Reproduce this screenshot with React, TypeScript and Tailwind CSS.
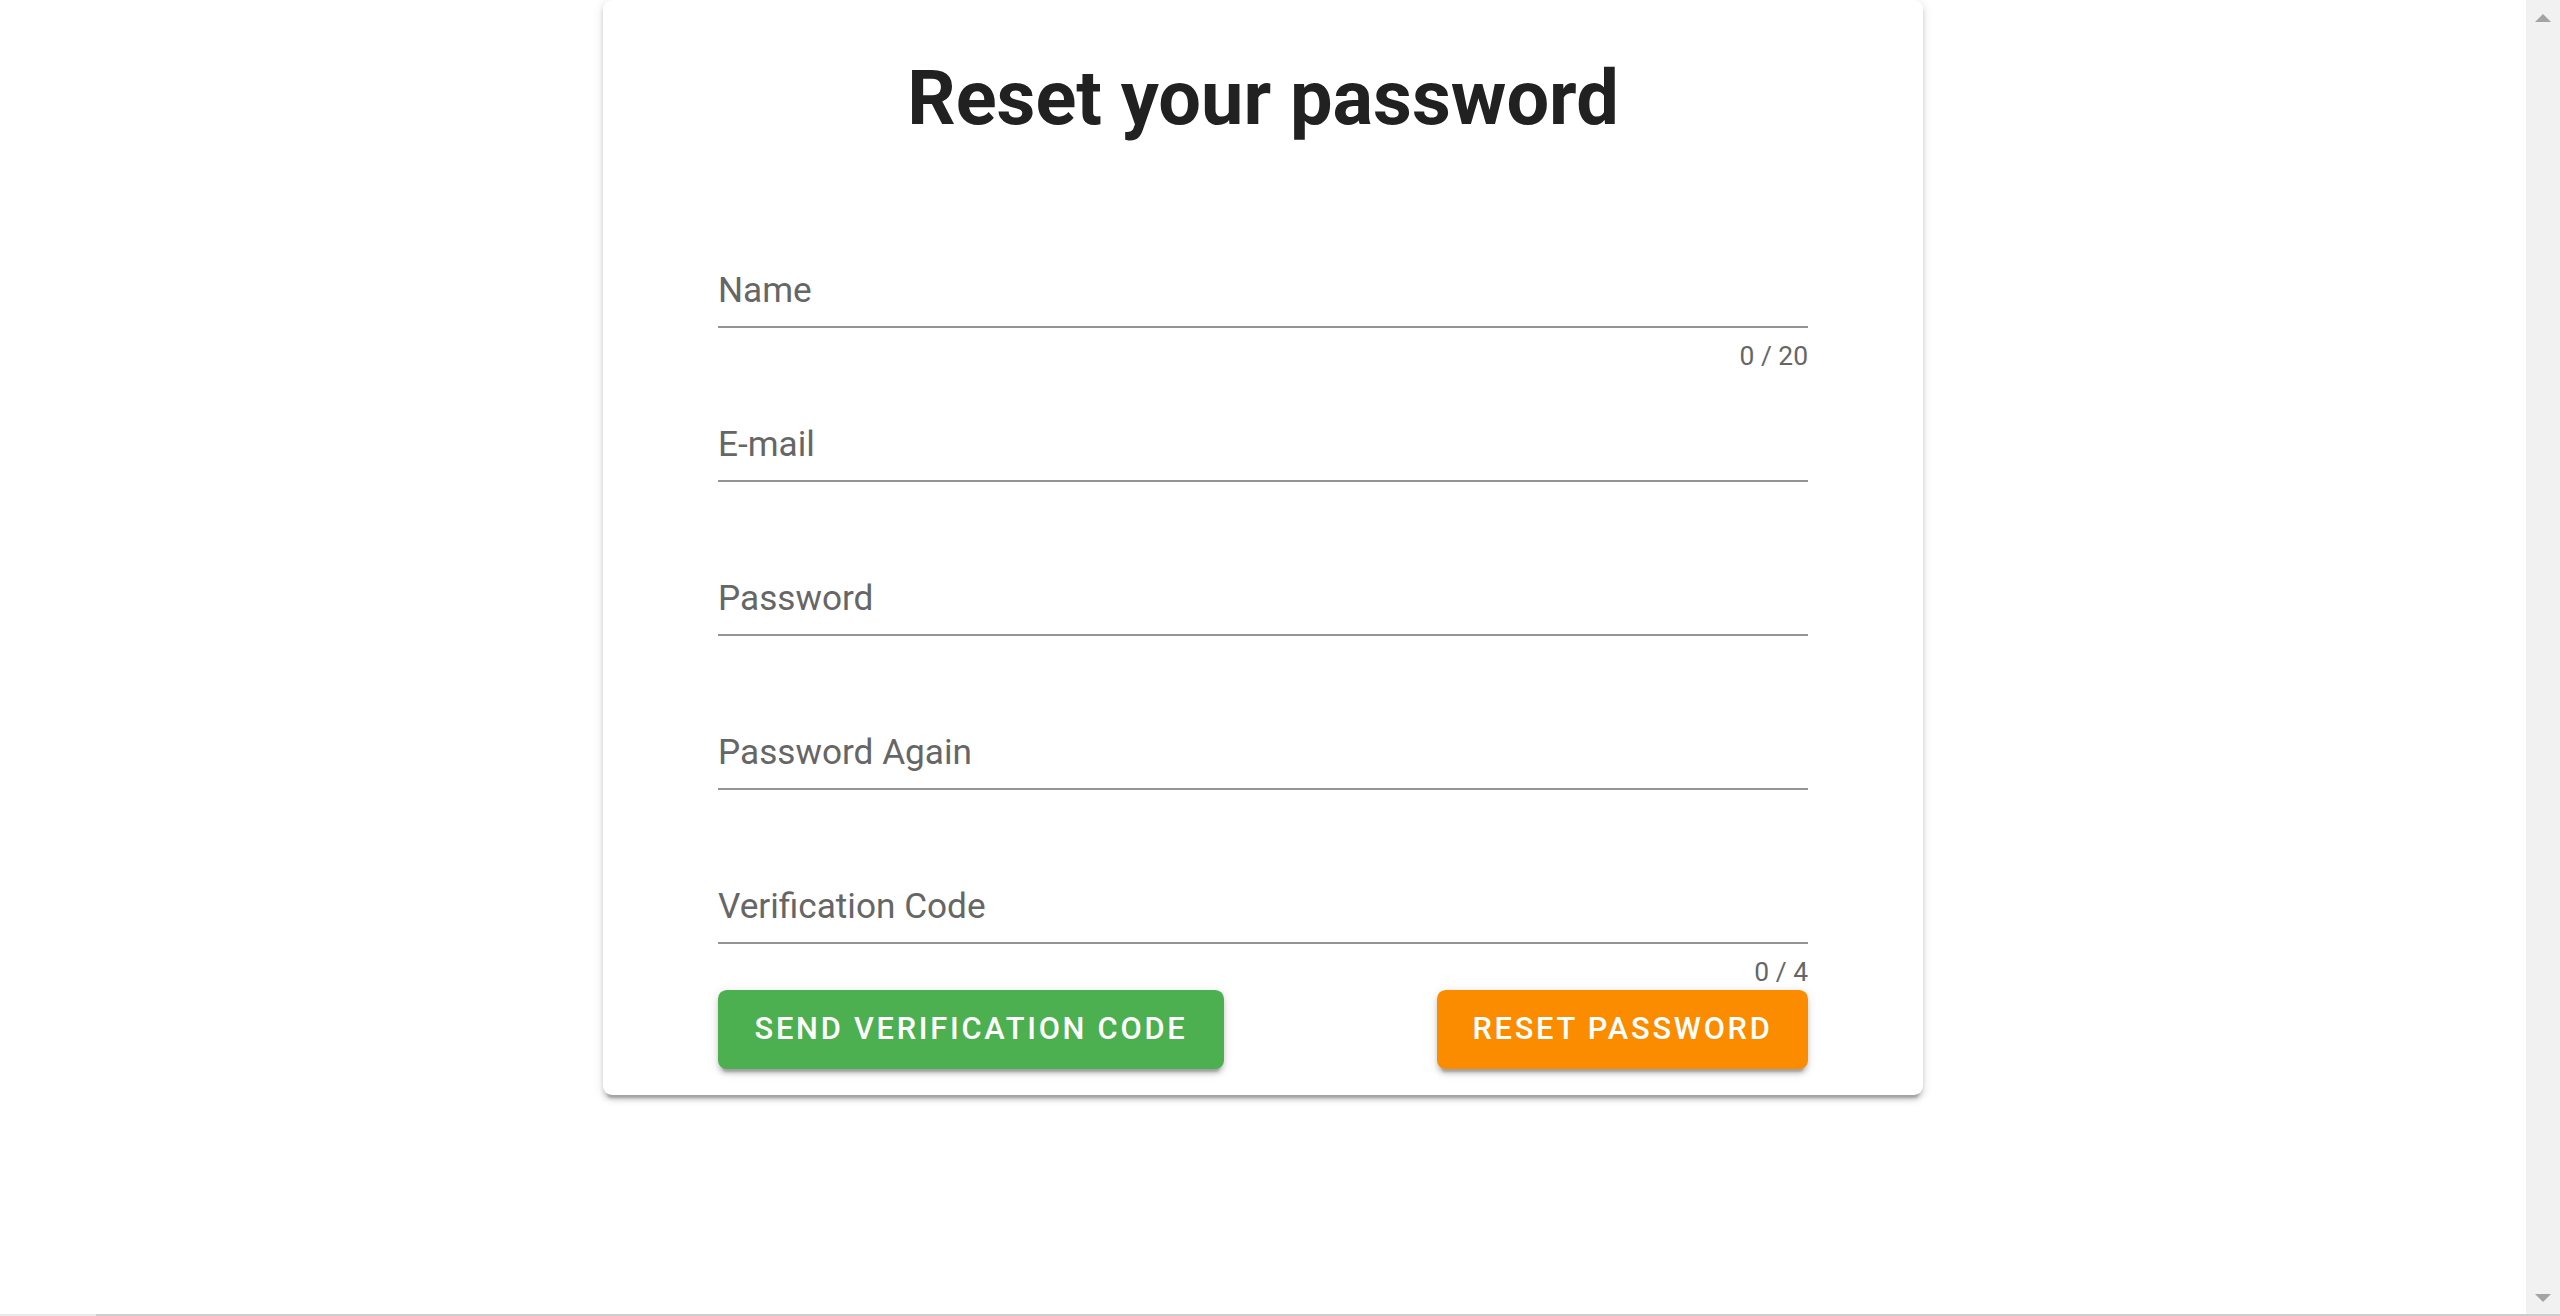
import React from "react";

const font = { fontFamily: "Roboto, 'Noto Sans', Arial, sans-serif" };

function Field({ label, counter, last }: { label: string; counter?: string; last?: boolean }) {
  return (
    <div className="flex flex-col">
      <div className="border-b-2 border-[#949494] pb-[14px]">
        <div className="h-[44px] leading-[44px] text-[35.2px] text-[#666666]">{label}</div>
      </div>
      <div className={last ? "h-[46px] flex justify-end" : "h-[94px] flex justify-end"}>
        {counter ? (
          <div className="mt-[15px] h-[26.4px] leading-[26.4px] text-[26.4px] text-[#666666]">{counter}</div>
        ) : null}
      </div>
    </div>
  );
}

function Triangle({ up }: { up?: boolean }) {
  return (
    <svg width="16" height="8" viewBox="0 0 16 8">
      {up ? <polygon points="0,8 16,8 8,0" fill="#a3a3a3" /> : <polygon points="0,0 16,0 8,8" fill="#a3a3a3" />}
    </svg>
  );
}

export default function App() {
  return (
    <div className="w-full h-[1316px] flex flex-col overflow-hidden bg-white" style={font}>
      <div className="flex flex-1 min-h-0">
        <div className="flex-1 flex justify-center items-start">
          <div className="w-[1320px] bg-white rounded-[9px] shadow-[0_6.6px_2.2px_-4.4px_rgba(0,0,0,0.2),0_4.4px_4.4px_0_rgba(0,0,0,0.14),0_2.2px_11px_0_rgba(0,0,0,0.12)] pt-[53.6px] pb-[26.5px] px-[115px] flex flex-col">
            <h1 className="text-center text-[75.7px] leading-[88px] font-bold text-[#212121]">Reset your password</h1>
            <div className="h-[126.4px]" />
            <Field label="Name" counter="0 / 20" />
            <Field label="E-mail" />
            <Field label="Password" />
            <Field label="Password Again" />
            <Field label="Verification Code" counter="0 / 4" last />
            <div className="flex justify-between">
              <button className="w-[506px] h-[79px] rounded-[8.8px] bg-[#4caf50] text-white uppercase font-medium text-[30.8px] tracking-[2.75px] flex items-center justify-center shadow-[0_6.6px_2.2px_-4.4px_rgba(0,0,0,0.2),0_4.4px_4.4px_0_rgba(0,0,0,0.14),0_2.2px_11px_0_rgba(0,0,0,0.12)]">
                Send Verification Code
              </button>
              <button className="w-[371px] h-[79px] rounded-[8.8px] bg-[#fb8c00] text-white uppercase font-medium text-[30.8px] tracking-[2.75px] flex items-center justify-center shadow-[0_6.6px_2.2px_-4.4px_rgba(0,0,0,0.2),0_4.4px_4.4px_0_rgba(0,0,0,0.14),0_2.2px_11px_0_rgba(0,0,0,0.12)]">
                Reset Password
              </button>
            </div>
          </div>
        </div>
        <div className="w-[34px] bg-[#f1f1f1] flex flex-col items-center justify-between pt-[14px] pb-[12px]">
          <Triangle up />
          <Triangle />
        </div>
      </div>
      <div className="h-[2px] flex">
        <div className="w-[96px] bg-[#e8e8e8]" />
        <div className="flex-1 bg-[#cdcdcd]" />
      </div>
    </div>
  );
}
